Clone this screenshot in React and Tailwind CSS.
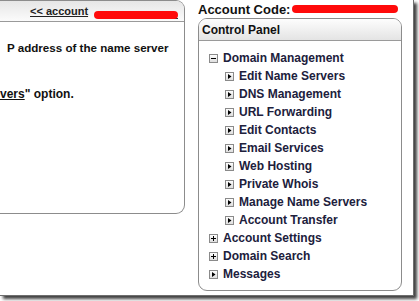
import React from "react";

const Icon = ({ type }) => (
  <svg width="9" height="9" viewBox="0 0 9 9" className="shrink-0">
    <defs>
      <linearGradient id={"g" + type} x1="0" y1="0" x2="0" y2="1">
        <stop offset="0" stopColor="#ffffff" />
        <stop offset="1" stopColor="#dcdcdc" />
      </linearGradient>
    </defs>
    <rect x="0.5" y="0.5" width="8" height="8" fill={"url(#g" + type + ")"} stroke="#8a8a8a" />
    {type === "minus" && <path d="M2 4.5H7" stroke="#000" strokeWidth="1" />}
    {type === "plus" && <path d="M2 4.5H7M4.5 2V7" stroke="#000" strokeWidth="1" />}
    {type === "arrow" && <polygon points="3,2 6.5,4.5 3,7" fill="#000" />}
  </svg>
);

const Row = ({ icon, label, indent }) => (
  <div className={"flex h-[18px] items-center gap-[5px] " + (indent ? "pl-[26px]" : "pl-[10px]")}>
    <Icon type={icon} />
    <span className="text-[12px] font-bold text-[#20203c] whitespace-nowrap">{label}</span>
  </div>
);

export default function App() {
  const sub = [
    "Edit Name Servers",
    "DNS Management",
    "URL Forwarding",
    "Edit Contacts",
    "Email Services",
    "Web Hosting",
    "Private Whois",
    "Manage Name Servers",
    "Account Transfer",
  ];
  return (
    <div
      className="w-[419px] h-[301px] bg-white overflow-hidden"
      style={{ fontFamily: '"Liberation Sans", Arial, sans-serif' }}
    >
      <div className="w-[414px] h-[296px] bg-white border-r border-b border-[#6e6e6e] shadow-[3px_3px_3px_rgba(0,0,0,0.75)] flex overflow-hidden">
        {/* Left panel */}
        <div className="w-[185px] h-[214px] shrink-0 border-r border-b border-t border-[#8c8c8c] rounded-tr-[9px] rounded-br-[9px] flex flex-col overflow-hidden">
          <div className="h-[21px] shrink-0 border-b border-[#9a9a9a] bg-gradient-to-b from-[#e6e6e6] to-[#fbfbfb] flex items-center pl-[30px] relative">
            <span className="text-[11px] font-bold text-[#222] underline leading-none">&lt;&lt; account</span>
            <span className="ml-[18px] w-[72px] border-b border-[#333] h-[16px]"></span>
            <div className="absolute left-[94px] top-[10px] w-[84px] h-[8px] rounded-full bg-[#ff0a0a]"></div>
          </div>
          <div className="pt-[14px] text-[12px] font-bold text-[#111] whitespace-nowrap">
            <div className="h-[23px] leading-[23px] pl-[7px] text-[11.6px]">P address of the name server</div>
            <div className="h-[24px]"></div>
            <div className="h-[23px] leading-[23px]">
              <span className="underline">vers</span>" option.
            </div>
          </div>
        </div>

        {/* Right column */}
        <div className="ml-[13px] w-[204px] shrink-0 flex flex-col">
          <div className="h-[18px] flex items-center relative">
            <span className="text-[13px] font-bold text-[#111] leading-none whitespace-nowrap">Account Code:</span>
            <div className="absolute left-[94px] top-[5px] w-[106px] h-[8px] rounded-full bg-[#ff0a0a]"></div>
          </div>
          <div className="w-[204px] h-[273px] border border-[#8c8c8c] rounded-[9px] overflow-hidden flex flex-col">
            <div className="h-[22px] shrink-0 border-b border-[#9a9a9a] bg-gradient-to-b from-[#fdfdfd] to-[#e4e4e4] flex items-center pl-[3px]">
              <span className="text-[12px] font-bold text-[#111]">Control Panel</span>
            </div>
            <div className="pt-[8px] flex flex-col">
              <Row icon="minus" label="Domain Management" />
              {sub.map((s) => (
                <Row key={s} icon="arrow" label={s} indent />
              ))}
              <Row icon="plus" label="Account Settings" />
              <Row icon="plus" label="Domain Search" />
              <Row icon="arrow" label="Messages" />
            </div>
          </div>
        </div>
      </div>
    </div>
  );
}
